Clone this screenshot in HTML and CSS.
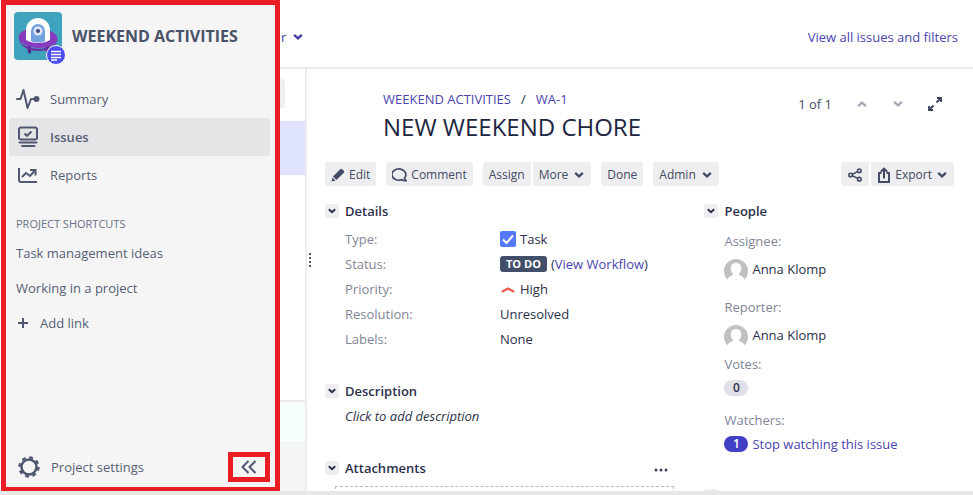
FILE: index.html
```html
<!DOCTYPE html>
<html lang="en">
<head>
<meta charset="utf-8">
<title>NEW WEEKEND CHORE</title>
<link rel="stylesheet" href="styles.css">
</head>
<body>
<svg class="defs" width="0" height="0" aria-hidden="true">
  <symbol id="chev" viewBox="0 0 10 10"><path d="M1.800 3.200l3.200 3L8.200 3.200" fill="none" stroke="currentColor" stroke-width="1.900"/></symbol>
  <symbol id="person" viewBox="0 0 24 24"><path d="M3.500 20.500A12 12 0 1 1 20.500 20.500L18 24H6z" fill="#c1c1c1"/><path d="M12 4c-3.600 0-5.500 2.500-5.300 5.600.1 2.300.9 3.800 2.100 4.800.3 1.300-.5 1.900-2 2.500C5 17.700 4 18.800 3.300 20.700L5 24.500h14l1.700-3.800c-.7-1.900-1.700-3-3.500-3.800-1.500-.6-2.300-1.200-2-2.500 1.200-1 2-2.500 2.100-4.800C17.500 6.500 15.600 4 12 4z" fill="#fff"/></symbol>
</svg>
<div class="app">
  <aside class="sidebar">
    <header class="project">
      <div class="avatar">
        <svg width="48" height="48" viewBox="0 0 48 48">
          <rect width="48" height="48" rx="4" fill="#3fa3bd"/>
          <path d="M13 33h4v7a1.500 1.500 0 0 1-3 0zM31 33h4v7a1.500 1.500 0 0 1-3 0z" fill="#52258d"/>
          <ellipse cx="24" cy="26" rx="19.500" ry="10" transform="rotate(3 24 26)" fill="#873cc0"/>
          <path d="M5 28c4 11 33 12 38 1-1 6-9 10-19 10S6 34 5 28z" fill="#6b2fa5"/>
          <path d="M12 18a12 12 0 0 1 24 0v10c-6 4-18 4-24 0z" fill="#fff"/>
          <path d="M17 19a7 7 0 0 1 14 0v10c-4 2-10 2-14 0z" fill="#72a1dc"/>
          <circle cx="24" cy="19" r="4.500" fill="#dfe6f8"/><circle cx="24" cy="19" r="2" fill="#39497f"/>
        </svg>
        <svg class="avatar-badge" width="20" height="20" viewBox="0 0 20 20"><circle cx="10" cy="10" r="9.500" fill="#4b4df5" stroke="#fff"/><path d="M5 6.500h10M5 9.500h10M5 12.500h10M5 15h6" stroke="#fff" stroke-width="1.500"/></svg>
      </div>
      <h2>WEEKEND ACTIVITIES</h2>
    </header>
    <nav class="nav">
      <a href="#summary"><svg width="24" height="24" viewBox="0 0 24 24" fill="none" stroke="#505871" stroke-width="2" stroke-linejoin="round"><path d="M1 12h3.500L7.500 3l4 18 3.500-9h5" stroke-linecap="round"/><circle cx="20.500" cy="12" r="3" fill="#505871" stroke="none"/></svg>Summary</a>
      <a href="#issues" class="active"><svg width="24" height="24" viewBox="0 0 24 24" fill="none" stroke="#505871" stroke-width="2"><rect x="3" y="2.500" width="18" height="12" rx="2"/><path d="M8.500 8.500l2.500 2.300 4.500-4.300"/><path d="M3.500 17.500h17M6 21h12.500" stroke-linecap="round"/></svg>Issues</a>
      <a href="#reports"><svg width="24" height="24" viewBox="0 0 24 24" fill="none" stroke="#505871" stroke-width="2"><path d="M3 5v12a2 2 0 0 0 2 2h16"/><path d="M6 14l4-4 4 3 5-5.500"/><path d="M14 7h5.500v5.500"/></svg>Reports</a>
    </nav>
    <h3>PROJECT SHORTCUTS</h3>
    <nav class="shortcuts">
      <a href="#ideas">Task management ideas</a>
      <a href="#working">Working in a project</a>
      <button type="button"><svg width="12" height="12" viewBox="0 0 12 12"><path d="M1 6h10M6 1v10" stroke="#505871" stroke-width="2"/></svg>Add link</button>
    </nav>
    <footer class="side-footer">
      <a href="#settings"><svg width="22" height="22" viewBox="0 0 22 22" fill="none" stroke="#505871"><circle cx="11" cy="11" r="7.500" stroke-width="2.500"/><circle cx="11" cy="11" r="9.400" stroke-width="2.600" stroke-dasharray="3.700 3.682"/></svg>Project settings</a>
      <button type="button" class="collapse" aria-label="Collapse sidebar"><svg width="16" height="14" viewBox="0 0 16 14" fill="none" stroke="#505871" stroke-width="2"><path d="M7.500 1l-6 6 6 6M14.500 1l-6 6 6 6"/></svg></button>
    </footer>
  </aside>
  <div class="page">
    <header class="topbar">
      <button type="button" class="filter">r <svg width="12" height="12"><use href="#chev"/></svg></button>
      <a href="#all">View all issues and filters</a>
    </header>
    <div class="body">
      <div class="list">
        <div class="list-head"><span></span></div>
        <div class="list-selected"></div>
        <div class="list-rest"></div>
        <div class="list-create"></div>
        <div class="list-foot"></div>
      </div>
      <main class="issue">
        <svg class="grip" width="2" height="14" viewBox="0 0 2 14"><path d="M1 0v14" stroke="#505560" stroke-width="2" stroke-dasharray="2 2"/></svg>
        <div class="issue-head">
          <div class="issue-name">
            <div class="crumbs"><a href="#wa">WEEKEND ACTIVITIES</a><span>/</span><a href="#wa-1">WA-1</a></div>
            <h1>NEW WEEKEND CHORE</h1>
          </div>
          <div class="pager">
            <span>1 of 1</span>
            <button type="button" aria-label="Previous" class="up"><svg width="12" height="12"><use href="#chev"/></svg></button>
            <button type="button" aria-label="Next"><svg width="12" height="12"><use href="#chev"/></svg></button>
            <button type="button" aria-label="Expand" class="expand"><svg width="14" height="14" viewBox="0 0 14 14" fill="none" stroke="currentColor" stroke-width="1.800"><path d="M8.500 5.500L12.500 1.500M9 1h4v4M5.500 8.500L1.500 12.500M1 9v4h4"/></svg></button>
          </div>
        </div>
        <div class="toolbar">
          <button type="button"><svg width="14" height="14" viewBox="0 0 14 14" fill="currentColor"><path d="M9.200 1.200a1.500 1.500 0 0 1 2 0l1.600 1.600a1.500 1.500 0 0 1 0 2L5.500 12 2 8.500zM1.500 9.500l3 3L.5 13.500z"/></svg>Edit</button>
          <button type="button"><svg width="15" height="14" viewBox="0 0 15 14" fill="none" stroke="currentColor" stroke-width="1.700"><path d="M10 11.600A7 5.600 0 1 1 12.600 9.800C12.600 11 13 12 14 12.700 12.500 12.900 11 12.600 10 11.600z"/></svg>Comment</button>
          <div class="group"><button type="button">Assign</button><button type="button" class="menu">More<svg width="12" height="12"><use href="#chev"/></svg></button></div>
          <button type="button">Done</button>
          <button type="button" class="menu">Admin<svg width="12" height="12"><use href="#chev"/></svg></button>
          <div class="group end"><button type="button" aria-label="Share"><svg width="16" height="16" viewBox="-1 -1 16 16" fill="none" stroke="currentColor" stroke-width="1.600"><circle cx="2.600" cy="7" r="1.800"/><circle cx="11.300" cy="2.800" r="1.800"/><circle cx="11.300" cy="11.200" r="1.800"/><path d="M4.200 6.200l5.500-2.600M4.200 7.800l5.500 2.600"/></svg></button><button type="button" class="menu export"><svg width="14" height="16" viewBox="0 0 14 16" fill="none" stroke="currentColor" stroke-width="2"><path d="M4.500 6H2v9h10V6H9.500M7 11.500V2M3.800 4.800L7 1.600l3.200 3.200"/></svg>Export<svg width="12" height="12"><use href="#chev"/></svg></button></div>
        </div>
        <div class="columns">
          <div>
            <section class="details">
              <h4><button type="button" class="toggle" aria-label="Toggle details"><svg width="10" height="10"><use href="#chev"/></svg></button>Details</h4>
              <dl>
                <dt>Type:</dt><dd><svg width="16" height="16" viewBox="0 0 16 16"><rect width="16" height="16" rx="2" fill="#5478ff"/><path d="M3 8.500l3.500 3.500L13 4.500" fill="none" stroke="#fff" stroke-width="2"/></svg>Task</dd>
                <dt>Status:</dt><dd><span class="status">TO DO</span><span>(<a href="#workflow">View Workflow</a>)</span></dd>
                <dt>Priority:</dt><dd><svg width="16" height="16" viewBox="0 0 16 16"><path d="M2.500 10.500L8 7.500l5.500 3" fill="none" stroke="#e9584c" stroke-width="2" stroke-linecap="round" stroke-linejoin="round"/></svg>High</dd>
                <dt>Resolution:</dt><dd>Unresolved</dd>
                <dt>Labels:</dt><dd>None</dd>
              </dl>
            </section>
            <section class="description">
              <h4><button type="button" class="toggle" aria-label="Toggle description"><svg width="10" height="10"><use href="#chev"/></svg></button>Description</h4>
              <p>Click to add description</p>
            </section>
            <section>
              <h4><button type="button" class="toggle" aria-label="Toggle attachments"><svg width="10" height="10"><use href="#chev"/></svg></button>Attachments<button type="button" class="dots" aria-label="More options"><svg width="14" height="4" viewBox="0 0 14 4" fill="#39415b"><circle cx="2" cy="2" r="1.500"/><circle cx="7" cy="2" r="1.500"/><circle cx="12" cy="2" r="1.500"/></svg></button></h4>
              <div class="dropzone"></div>
            </section>
          </div>
          <div>
            <section class="people">
              <h4><button type="button" class="toggle" aria-label="Toggle people"><svg width="10" height="10"><use href="#chev"/></svg></button>People</h4>
              <dl>
                <dt>Assignee:</dt><dd class="person"><svg width="24" height="24"><use href="#person"/></svg>Anna Klomp</dd>
                <dt>Reporter:</dt><dd class="person reporter"><svg width="24" height="24"><use href="#person"/></svg>Anna Klomp</dd>
                <dt>Votes:</dt><dd class="votes"><span class="count">0</span></dd>
                <dt>Watchers:</dt><dd class="watchers"><span class="count own">1</span><a href="#watch">Stop watching this issue</a></dd>
              </dl>
            </section>
            <section>
              <h4><button type="button" class="toggle" aria-label="Toggle next section"><svg width="10" height="10"><use href="#chev"/></svg></button></h4>
            </section>
          </div>
        </div>
      </main>
    </div>
  </div>
</div>
</body>
</html>
```
FILE: styles.css
```css
* { box-sizing: border-box; }
body {
  margin: 0;
  font: 13px/20px "Open Sans", "Noto Sans", sans-serif;
  color: #2b3049;
  background: #fff;
}
h1, h2, h3, h4, p, dl, dd { margin: 0; }
a { color: #4a45b0; text-decoration: none; }
button { font: inherit; color: inherit; border: 0; padding: 0; background: none; display: flex; align-items: center; }
svg { display: block; flex: none; }
.defs { position: absolute; }
.app { display: flex; height: 100vh; overflow: hidden; border-bottom: 4px solid #e7e7e8; }

.sidebar {
  flex: none; width: 279px; margin-left: 1px; padding: 7px 5px 5px 3px;
  display: flex; flex-direction: column;
  border: 5px solid #ea1c24; background: #f5f5f5; color: #565e76;
  margin-bottom: -1px;
}
.sidebar a { color: inherit; }
.project { display: flex; align-items: center; gap: 10px; padding-left: 5px; margin-bottom: 20px; }
.avatar { position: relative; }
.avatar-badge { position: absolute; right: -4px; bottom: -5px; }
.project h2 { font-size: 16px; font-weight: 700; color: #4a526a; }
.nav a { display: flex; align-items: center; gap: 10px; height: 38px; padding-left: 7px; border-radius: 3px; }
.nav .active { background: #e5e5e7; font-weight: 600; }
.sidebar h3 { margin: 20px 0 9px 7px; font-size: 11px; font-weight: 400; color: #6a7186; }
.shortcuts { display: flex; flex-direction: column; gap: 15px; padding-left: 7px; }
.shortcuts button { gap: 11px; padding-left: 1px; }
.side-footer { display: flex; justify-content: space-between; align-items: center; margin-top: auto; padding-left: 9px; }
.side-footer a { display: flex; align-items: center; gap: 11px; }
.collapse { width: 42px; height: 30px; justify-content: center; border: 5px solid #ea1c24; }

.page { flex: 1; min-width: 0; display: flex; flex-direction: column; }
.topbar { flex: none; height: 69px; padding: 7px 15px 0 1px; display: flex; justify-content: space-between; align-items: center; border-bottom: 2px solid #ececef; }
.filter { gap: 6px; color: #403ba8; }
.body { flex: 1; min-height: 0; display: flex; }
.list { flex: none; width: 27px; border-right: 2px solid #ececef; display: flex; flex-direction: column; }
.list-head { height: 52px; padding-top: 10px; }
.list-head span { display: block; width: 5px; height: 29px; background: #f0f0f3; border-radius: 0 3px 3px 0; }
.list-selected { height: 54px; background: #dfe3ff; }
.list-rest { flex: 1; border-bottom: 2px solid #ececef; }
.list-create { height: 39px; background: #f6fffe; }
.list-foot { height: 50px; background: #f4f5f5; }

.issue { position: relative; flex: 1; min-width: 0; padding: 20px 19px 0 18px; overflow: hidden; }
.grip { position: absolute; left: 2px; top: 184px; }
.issue-head { display: flex; justify-content: space-between; padding: 0 12px 0 58px; margin-bottom: 18px; }
.crumbs { display: flex; gap: 10px; }
h1 { font-size: 24px; line-height: 35px; font-weight: 500; color: #20263f; }
.pager { display: flex; height: 30px; align-items: center; gap: 24px; color: #454d66; }
.pager button { color: #a7abb8; }
.pager .up svg { transform: rotate(180deg); }
.pager .expand { color: #39415b; }
.toolbar { display: flex; gap: 10px; margin-bottom: 13px; color: #434a63; font-size: 12px; }
.toolbar button { height: 24px; padding: 2px 6px 0; gap: 4px; background: #eeeef0; border-radius: 3px; }
.toolbar .menu { gap: 5px; }
.toolbar .export { gap: 4px; }
.group { display: flex; gap: 2px; }
.group.end { margin-left: auto; }
.group button:first-child { border-radius: 3px 0 0 3px; }
.group button:last-child { border-radius: 0 3px 3px 0; }

.columns { display: grid; grid-template-columns: 7fr 5fr; column-gap: 30px; }
h4 { display: flex; align-items: center; gap: 6px; height: 24px; font-size: 13px; font-weight: 600; }
.toggle { width: 14px; height: 14px; justify-content: center; background: #eeeef2; border-radius: 3px; }
dt { color: #7f8597; }
.details dl { display: grid; grid-template-columns: 155px 1fr; grid-auto-rows: 25px; align-items: center; margin: 3px 0 28px 20px; }
.details dd { display: flex; align-items: center; gap: 4px; }
.status { background: #434f6a; color: #fff; border-radius: 3px; font-size: 11px; line-height: 16px; font-weight: 700; padding: 0 6px; }
.description p { margin: 3px 0 30px 20px; font-style: italic; }
.dots { margin: 4px 6px 0 auto; }
.dropzone { height: 60px; margin: 6px 0 0 10px; border: 1px dashed #b9bcc5; }
.people dl { padding: 8px 0 30px 20px; }
.person { display: flex; gap: 4px; margin: 8px 0 14px; height: 24px; }
.reporter { margin-bottom: 5px; }
.count { display: block; width: 24px; border-radius: 8px; background: #dfe1e6; text-align: center; font-size: 12px; line-height: 16px; font-weight: 600; }
.own { background: #403fc6; color: #fff; }
.votes { margin: 6px 0 14px; }
.watchers { display: flex; align-items: center; gap: 4px; margin-top: 4px; }
```
